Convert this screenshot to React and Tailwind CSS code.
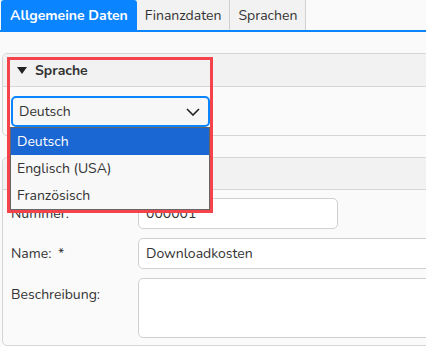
export default function App() {
  const font = { fontFamily: '"Nunito", "Lato", "Open Sans", sans-serif' }
  const options = ['Deutsch', 'Englisch (USA)', 'Französisch']

  return (
    <div className="relative w-[426px] h-[346px] overflow-hidden bg-[#fafafa] text-[14px] text-[#333]" style={font}>
      {/* Tabs */}
      <div className="flex h-[32px] border-b-2 border-[#0a84ff] pl-[1px]">
        <div className="flex items-center px-[9px] bg-[#0a84ff] text-white font-bold rounded-t-[3px]">Allgemeine Daten</div>
        <div className="flex items-center px-[8px] bg-[#f2f2f2] border-r border-[#d0d0d0]">Finanzdaten</div>
        <div className="flex items-center px-[8px] bg-[#f2f2f2] border-r border-[#d0d0d0]">Sprachen</div>
      </div>

      <div className="pl-[2px] pt-[21px] w-[640px]">
        {/* Panel Sprache */}
        <div className="border border-[#d6d6d6] rounded-[5px] bg-[#fafafa]">
          <div className="flex items-center gap-[8px] h-[33px] px-[14px] bg-[#f2f2f2] border-b border-[#d6d6d6] rounded-t-[5px] font-bold">
            <svg width="10" height="7" viewBox="0 0 10 7"><path d="M0 0h10L5 7z" fill="#222" /></svg>
            Sprache
          </div>
          <div className="pt-[9px] pb-[8px] pl-[8px]">
            <div className="flex items-center justify-between w-[199px] h-[31px] px-[6px] border-2 border-[#0a84ff] rounded-[5px] bg-[#f7f7f7]">
              <span>Deutsch</span>
              <svg width="14" height="8" viewBox="0 0 14 8" className="mr-[2px]"><path d="M1 1l6 6 6-6" fill="none" stroke="#222" strokeWidth="1.6" /></svg>
            </div>
          </div>
        </div>

        {/* Panel Allgemein */}
        <div className="mt-[21px] border border-[#d6d6d6] rounded-[5px] bg-[#fafafa] pb-[7px]">
          <div className="h-[32px] bg-[#f2f2f2] border-b border-[#d6d6d6] rounded-t-[5px]" />
          <div className="flex flex-col gap-[9px] pt-[8px] pl-[8px]">
            <div className="flex items-center">
              <div className="w-[127px]">Nummer: <span className="ml-[3px]">*</span></div>
              <div className="flex items-center w-[200px] h-[31px] px-[7px] bg-white border border-[#d0d0d0] rounded-[5px]">000001</div>
            </div>
            <div className="flex items-center">
              <div className="w-[127px]">Name: <span className="ml-[3px]">*</span></div>
              <div className="flex items-center w-[400px] h-[31px] px-[7px] bg-white border border-[#d0d0d0] rounded-[5px]">Downloadkosten</div>
            </div>
            <div className="flex items-start">
              <div className="w-[127px] pt-[6px]">Beschreibung:</div>
              <div className="w-[400px] h-[60px] bg-white border border-[#d0d0d0] rounded-[5px]" />
            </div>
          </div>
        </div>
      </div>

      {/* Open dropdown list */}
      <div className="absolute left-[10px] top-[127px] w-[200px] bg-[#f8f8f8] border border-[#666]">
        {options.map((o, i) => (
          <div key={o} className={`flex items-center h-[27px] px-[6px] ${i === 0 ? 'bg-[#1a66d2] text-white' : ''}`}>{o}</div>
        ))}
      </div>

      {/* Red highlight */}
      <div className="absolute left-[7px] top-[57px] w-[206px] h-[156px] border-[3px] border-[#f4434a] pointer-events-none" />
    </div>
  )
}
